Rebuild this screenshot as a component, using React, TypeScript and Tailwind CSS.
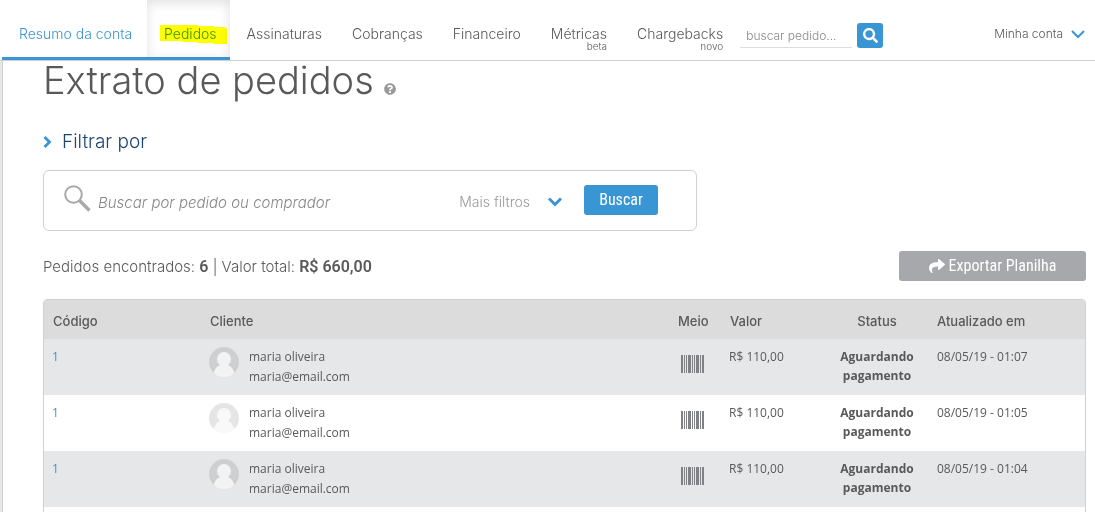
import { FaQuestionCircle, FaSearch, FaShare } from "react-icons/fa";

type NavItem = { label: string; tag?: string };

const navItems: NavItem[] = [
  { label: "Assinaturas" },
  { label: "Cobranças" },
  { label: "Financeiro" },
  { label: "Métricas", tag: "beta" },
  { label: "Chargebacks", tag: "novo" },
];

const orders = [
  { code: "1", name: "maria oliveira", email: "maria@email.com", value: "R$ 110,00", updated: "08/05/19 - 01:07" },
  { code: "1", name: "maria oliveira", email: "maria@email.com", value: "R$ 110,00", updated: "08/05/19 - 01:05" },
  { code: "1", name: "maria oliveira", email: "maria@email.com", value: "R$ 110,00", updated: "08/05/19 - 01:04" },
];

function Avatar() {
  return (
    <svg width="30" height="30" viewBox="0 0 30 30" aria-hidden="true">
      <circle cx="15" cy="15" r="15" fill="#000" fillOpacity="0.1" />
      <g fill="#fff" opacity="0.75">
        <ellipse cx="15" cy="12.200" rx="7" ry="7.200" />
        <path d="M4.600 25.900C5.800 21.500 8.500 18.700 12 17.700H18C21.500 18.700 24.200 21.500 25.400 25.900A15 15 0 0 1 4.600 25.900Z" />
      </g>
    </svg>
  );
}

function Barcode() {
  return (
    <svg width="23" height="18" viewBox="0 0 23 18" fill="#808184" shapeRendering="crispEdges" role="img" aria-label="Boleto">
      <path d="M0 0h2v18H0zM3 0h1v18H3zM5 0h1v18H5zM7 0h3v18H7zM11 0h1v18h-1zM13 0h1v18h-1zM15 0h3v18h-3zM19 0h1v18h-1zM21 0h2v18h-2z" />
    </svg>
  );
}

export default function App() {
  return (
    <div className="h-screen overflow-hidden bg-white font-['Inter','Liberation_Sans',sans-serif] text-[#58595b]">
      <header className="flex h-[61px] items-stretch border-b border-[#cfd0d1]">
        <nav className="ml-[2px] flex text-sm font-light text-[#58595b]">
          <a href="#resumo" className="flex h-[60px] border-b-[3px] border-[#3995d4] pt-6 pr-[15px] pl-[17px] leading-5 text-[#3995d4]">
            Resumo da conta
          </a>
          <a href="#pedidos" className="relative h-[60px] border-b-[3px] border-[#3995d4] pt-6 pr-[13px] pl-[17px] leading-5 text-[#3995d4] shadow-[inset_0_3px_12px_rgba(0,0,0,0.12)]">
            Pedidos
            <svg className="absolute top-[25px] left-[13px] mix-blend-multiply" width="67" height="19" viewBox="0 0 67 19" aria-hidden="true">
              <path d="M0 0H38V1H54V2H65V3H67V19H53V18H37V17H22V16H0Z" fill="#ff0" />
            </svg>
          </a>
          <div className="ml-[17px] flex gap-[30px] pt-6">
            {navItems.map((item) => (
              <a key={item.label} href={"#" + item.label.toLowerCase()} className="flex flex-col items-end leading-5">
                {item.label}
                {item.tag && <span className="-mt-1 text-[10px] leading-3">{item.tag}</span>}
              </a>
            ))}
          </div>
        </nav>
        <form className="ml-[17px] flex items-start gap-[5px] pt-[23px]">
          <input aria-label="buscar pedido" placeholder="buscar pedido..." className="h-[25px] w-28 border-b border-[#ddd] px-1.5 text-xs font-light outline-none placeholder:text-[#888]" />
          <button type="button" aria-label="Buscar" className="grid h-[25px] w-[26px] place-items-center rounded-[3px] bg-[#3995d4] text-white">
            <FaSearch size={15} />
          </button>
        </form>
        <button type="button" className="mt-6 mr-[10px] ml-auto flex h-5 items-center gap-2 text-xs font-light">
          Minha conta
          <svg width="14" height="9" viewBox="0 0 14 9" fill="none" stroke="#3995d4" strokeWidth="2" aria-hidden="true">
            <path d="M1 1L7 7L13 1" />
          </svg>
        </button>
      </header>

      <div className="border-l-2 border-[#e6e7e8]">
        <main className="min-h-screen border-l border-[#cfd0d1] pr-[9px] pl-10">
          <h1 className="flex items-end gap-[10px] text-[38px] leading-[38px] font-light">
            Extrato de pedidos
            <FaQuestionCircle size={12} className="mb-1 text-[#999]" aria-label="Ajuda" />
          </h1>

          <button type="button" className="mt-[29px] flex items-center gap-2.5 text-[19px] leading-7 font-light text-[#1c4670]">
            <svg width="9" height="12" viewBox="0 0 9 12" fill="none" stroke="#3995d4" strokeWidth="2.800" aria-hidden="true">
              <path d="M1.500 1L6.500 6L1.500 11" />
            </svg>
            Filtrar por
          </button>

          <form className="mt-[14px] flex h-[61px] max-w-[654px] items-center rounded-md border border-[#cfd0d1] pr-[38px] pb-0.5 pl-5">
            <svg className="mb-0.5" width="27" height="27" viewBox="0 0 27 27" fill="none" stroke="#a7a8ac" aria-hidden="true">
              <circle cx="9.500" cy="9.500" r="8.300" strokeWidth="2" />
              <path d="M15.500 15.500L25.500 25.500" strokeWidth="3.400" />
            </svg>
            <input aria-label="Buscar por pedido ou comprador" placeholder="Buscar por pedido ou comprador" className="mt-1.5 ml-[7px] h-8 min-w-0 flex-1 text-[15px] font-light italic outline-none placeholder:text-[#888]" />
            <button type="button" className="mt-1 flex items-center gap-[18px] text-sm font-light text-[#999]">
              Mais filtros
              <svg width="14" height="10" viewBox="0 0 14 10" fill="none" stroke="#3995d4" strokeWidth="3" aria-hidden="true">
                <path d="M1 1.500L7 7.500L13 1.500" />
              </svg>
            </button>
            <button type="button" className="ml-[22px] h-[30px] w-[74px] rounded-[3px] bg-[#3995d4] font-['Liberation_Sans_Narrow','Roboto_Condensed',sans-serif] text-base text-white">
              Buscar
            </button>
          </form>

          <div className="mt-5 flex items-center justify-between">
            <p className="pt-0.5 text-[15px] leading-6 font-light">
              Pedidos encontrados: <strong className="font-['Roboto',sans-serif] text-base font-semibold">6</strong> | Valor total:{" "}
              <strong className="font-['Roboto',sans-serif] text-base font-semibold">R$ 660,00</strong>
            </p>
            <button type="button" className="flex h-[30px] w-[187px] items-center justify-center gap-1 rounded-[3px] bg-[#a7a8ac] font-['Liberation_Sans_Narrow','Roboto_Condensed',sans-serif] text-base text-white">
              <FaShare size={16} aria-hidden="true" />
              Exportar Planilha
            </button>
          </div>

          <div className="mt-[18px] overflow-hidden rounded-t-[4px] border border-[#cfd0d1] pb-14">
            <table className="w-full table-fixed border-collapse text-left font-['Open_Sans',sans-serif] text-xs">
              <thead className="bg-[#dcdcdc] font-['Inter',sans-serif] text-[13px]">
                <tr className="h-[39px]">
                  <th className="w-[156px] pt-1 pl-[9px] font-medium">Código</th>
                  <th className="pt-1 pl-[10px] font-medium">Cliente</th>
                  <th className="w-[52px] pt-1 pl-[10px] font-medium">Meio</th>
                  <th className="w-[99px] pt-1 pl-[10px] font-medium">Valor</th>
                  <th className="w-[116px] pt-1 text-center font-medium">Status</th>
                  <th className="w-[150px] pt-1 pl-[2px] font-medium">Atualizado em</th>
                </tr>
              </thead>
              <tbody>
                {orders.map((order) => (
                  <tr key={order.updated} className="h-14 align-top leading-5 odd:bg-[#e6e7e8]">
                    <td className="pt-2 pl-2 text-[#3995d4]"><a href="#pedido">{order.code}</a></td>
                    <td className="pt-2 pl-[9px]">
                      <div className="flex gap-[10px]">
                        <Avatar />
                        <div>
                          <p>{order.name}</p>
                          <p>{order.email}</p>
                        </div>
                      </div>
                    </td>
                    <td className="pt-4 pl-[13px]"><Barcode /></td>
                    <td className="pt-2 pl-[9px]">{order.value}</td>
                    <td className="px-4 pt-2 text-center leading-[19px] font-bold">Aguardando pagamento</td>
                    <td className="pt-2 pl-[2px]">{order.updated}</td>
                  </tr>
                ))}
              </tbody>
            </table>
          </div>
        </main>
      </div>
    </div>
  );
}
